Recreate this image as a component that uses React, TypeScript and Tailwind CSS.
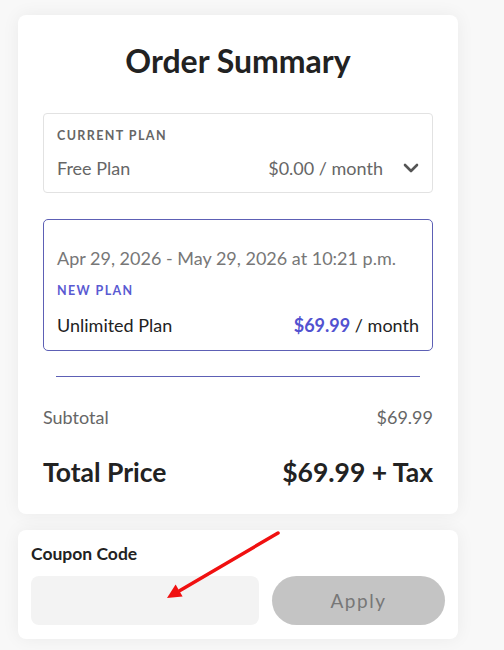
import React from 'react';

const font = { fontFamily: 'Lato, "Noto Sans", sans-serif' };

const ChevronDown: React.FC = () => (
  <svg width="16" height="10" viewBox="0 0 16 10" fill="none" className="text-[#555]">
    <path d="M2 2l6 6 6-6" stroke="currentColor" strokeWidth="2.6" strokeLinecap="round" strokeLinejoin="round" />
  </svg>
);

const App: React.FC = () => {
  return (
    <div className="relative min-h-[650px] w-[504px] bg-[#f8f8f8] pl-[18px] pt-[15px]" style={font}>
      {/* Order summary card */}
      <div className="w-[440px] rounded-lg bg-white px-[25px] pb-[26px] pt-[28px] shadow-[0_0_18px_rgba(0,0,0,0.06)]">
        <h1 className="text-center text-[32px] font-bold leading-[36px] text-[#222]">Order Summary</h1>

        <div className="mt-[34px] rounded border border-[#e2e2e2] px-[13px] pb-[12px] pt-[14px]">
          <div className="text-[12.5px] font-bold uppercase leading-4 tracking-[1.4px] text-[#666]">Current Plan</div>
          <div className="mt-[12px] flex items-center justify-between text-[18px] leading-6 text-[#666]">
            <span>Free Plan</span>
            <div className="flex items-center gap-[20px]">
              <span>$0.00 / month</span>
              <ChevronDown />
            </div>
          </div>
        </div>

        <div className="mt-[26px] rounded-[5px] border border-[#5d60b5] px-[13px] pb-[13px] pt-[26px]">
          <div className="text-[18px] leading-6 text-[#777]">Apr 29, 2026 - May 29, 2026 at 10:21 p.m.</div>
          <div className="mt-[13px] text-[12.5px] font-bold uppercase leading-4 tracking-[1.4px] text-[#5a5ad2]">New Plan</div>
          <div className="mt-[14px] flex items-center justify-between text-[18px] leading-6 text-[#222]">
            <span>Unlimited Plan</span>
            <span>
              <span className="font-bold text-[#5252d0]">$69.99</span> / month
            </span>
          </div>
        </div>

        <div className="mx-[13px] mt-[25px] h-px bg-[#5d60b5]" />

        <div className="mt-[28px] flex items-center justify-between text-[18px] leading-6 text-[#666]">
          <span>Subtotal</span>
          <span>$69.99</span>
        </div>

        <div className="mt-[27px] flex items-center justify-between text-[26.5px] font-bold leading-8 text-[#222]">
          <span>Total Price</span>
          <span>$69.99 + Tax</span>
        </div>
      </div>

      {/* Coupon card */}
      <div className="mt-[16px] w-[440px] rounded-lg bg-white px-[13px] pb-[14px] pt-[13px] shadow-[0_0_18px_rgba(0,0,0,0.06)]">
        <label className="block text-[17.5px] font-bold leading-[22px] text-[#222]">Coupon Code</label>
        <div className="mt-[11px] flex gap-[13px]">
          <input className="h-[49px] w-[228px] rounded-lg bg-[#f3f3f3] px-3 text-[16px] outline-none" />
          <button className="h-[49px] flex-1 rounded-full bg-[#c4c4c4] pt-px text-[19px] tracking-[1.5px] text-[#777]">Apply</button>
        </div>
      </div>

      {/* annotation arrow */}
      <svg className="pointer-events-none absolute left-0 top-0" width="504" height="650">
        <line x1="278" y1="533" x2="180" y2="590.5" stroke="#f01010" strokeWidth="3.5" strokeLinecap="round" />
        <polygon points="167,598 182.6,596.6 175.6,584.6" fill="#f01010" />
      </svg>
    </div>
  );
};

export default App;
